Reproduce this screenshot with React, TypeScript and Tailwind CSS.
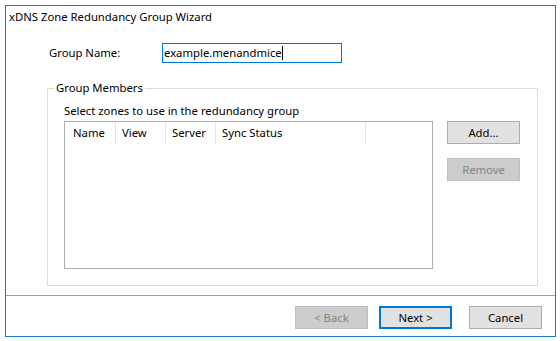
export default function App() {
  const font = { fontFamily: '"Noto Sans", "Open Sans", sans-serif' };
  const btn =
    'w-[73px] h-[23px] border flex items-center justify-center text-[11.3px] leading-none';
  return (
    <div className="w-[560px] h-[341px] bg-white pt-[5px] pl-[5px] text-black" style={font}>
      <div className="w-[551px] h-[332px] border border-[#1e78c8] flex flex-col">
        <div className="h-[22px] pl-[3px] pt-[3px] text-[11.3px] leading-[16px]">
          xDNS Zone Redundancy Group Wizard
        </div>

        <div className="mt-[15px] pl-[43px] flex items-center h-[20px]">
          <span className="w-[113px] text-[11.3px] pt-[1px]">Group Name:</span>
          <div className="w-[180px] h-[20px] border border-[#0078d7] flex items-center pl-[1px] text-[11.3px]">
            <span>example.menandmice</span>
            <span className="w-px h-[14px] bg-black" />
          </div>
        </div>

        <div className="relative mt-[25px] ml-[41px] w-[491px] h-[198px] border border-[#dcdcdc] pt-[14px] pl-[16px]">
          <span className="absolute -top-[9px] left-[6px] bg-white px-[2px] text-[11.3px] leading-[16px]">
            Group Members
          </span>
          <div className="text-[11.3px] leading-[16px]">Select zones to use in the redundancy group</div>
          <div className="flex mt-[2px]">
            <div className="w-[369px] h-[148px] border border-[#adadad]">
              <div className="flex h-[22px] text-[11.3px]">
                <div className="w-[51px] border-r border-[#e5e5e5] pl-[8px] flex items-center">Name</div>
                <div className="w-[50px] border-r border-[#e5e5e5] pl-[6px] flex items-center">View</div>
                <div className="w-[50px] border-r border-[#e5e5e5] pl-[6px] flex items-center">Server</div>
                <div className="w-[150px] border-r border-[#e5e5e5] pl-[6px] flex items-center">Sync Status</div>
              </div>
            </div>
            <div className="ml-[14px] flex flex-col gap-[14px]">
              <div className={`${btn} bg-[#e1e1e1] border-[#adadad]`}>Add...</div>
              <div className={`${btn} bg-[#cccccc] border-[#bfbfbf] text-[#838383]`}>Remove</div>
            </div>
          </div>
        </div>

        <div className="mt-[9px] border-t border-[#a0a0a0] flex-1 flex justify-end items-start pt-[10px] pr-[13px] gap-[11px]">
          <div className={`${btn} bg-[#cccccc] border-[#bfbfbf] text-[#838383]`}>&lt; Back</div>
          <div className={`${btn} bg-[#e1e1e1] border-2 border-[#0078d7]`}>Next &gt;</div>
          <div className={`${btn} bg-[#e1e1e1] border-[#adadad] ml-[6px]`}>Cancel</div>
        </div>
      </div>
    </div>
  );
}
